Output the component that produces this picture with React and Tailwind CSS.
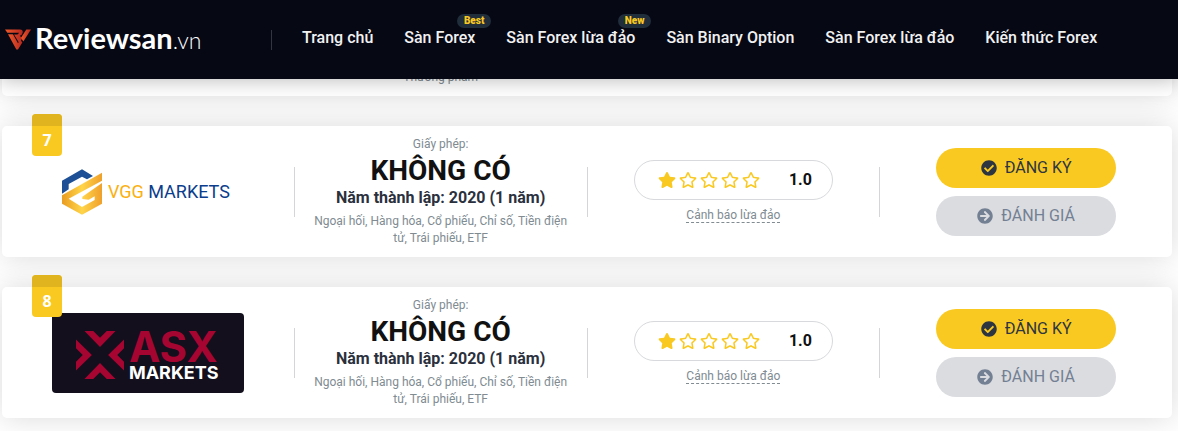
import React from "react";
import {
  FaStar,
  FaRegStar,
  FaCheckCircle,
  FaArrowCircleRight,
} from "react-icons/fa";

const navItems = [
  { label: "Trang chủ" },
  { label: "Sàn Forex", badge: "Best" },
  { label: "Sàn Forex lừa đảo", badge: "New" },
  { label: "Sàn Binary Option" },
  { label: "Sàn Forex lừa đảo" },
  { label: "Kiến thức Forex" },
];

function SiteLogo() {
  return (
    <a href="#" className="flex w-[266px] shrink-0 items-center text-white">
      <svg viewBox="0 0 78 62" className="mt-1 h-[21px] w-[26px]">
        <defs>
          <linearGradient id="siteMark" x1="0" y1="0" x2="1" y2="0">
            <stop offset="0" stopColor="#f0592a" />
            <stop offset="1" stopColor="#b5281f" />
          </linearGradient>
        </defs>
        <g fill="url(#siteMark)">
          <path d="M0 1H45Q55 2 53 11Q51 18 45 20L51 29L43 42L27 16H37Q41 15 42 11H7Z" />
          <path d="M9 15H24L39 42L46 32L52 40L39 61H34Z" />
          <path d="M64 1H78L55 37L48 26Z" />
        </g>
      </svg>
      <span className="ml-1 font-['Lato',sans-serif] text-[29px] leading-8 font-bold">
        Reviewsan
      </span>
      <span className="mt-1 font-['Lato',sans-serif] text-[23px] leading-8 font-light">
        .vn
      </span>
    </a>
  );
}

function Header() {
  return (
    <header className="relative z-10 flex h-[79px] items-center bg-[#060814] pb-1 pl-[5px] shadow-[0_0_20px_rgba(0,0,0,0.3)]">
      <SiteLogo />
      <span className="mt-1 h-5 w-px shrink-0 bg-[#34363f]" />
      <nav className="ml-[30px] flex gap-[31px] whitespace-nowrap">
        {navItems.map((item, i) => (
          <a
            key={i}
            href="#"
            className="relative text-base leading-5 font-medium text-[#f1f1f2]"
          >
            {item.label}
            {item.badge && (
              <span className="absolute -top-[14px] -right-4 h-[14px] rounded-full bg-[#202d3b] px-[7px] text-[10px] leading-[14px] font-black text-[#f9c922]">
                {item.badge}
              </span>
            )}
          </a>
        ))}
      </nav>
    </header>
  );
}

function VggLogo() {
  return (
    <div className="flex h-20 w-48 items-center pl-[10px]">
      <svg viewBox="0 0 120 136" className="h-[46px] w-10 shrink-0">
        <defs>
          <linearGradient id="vggGold" x1="0" y1="0" x2="1" y2="0">
            <stop offset="0" stopColor="#ea9c20" />
            <stop offset="0.5" stopColor="#ffd54a" />
            <stop offset="1" stopColor="#f0a02b" />
          </linearGradient>
        </defs>
        <path
          d="M60 0L93 20L75 30L60 22L20 44V60L0 73V34Z"
          fill="#1c4f96"
        />
        <path
          d="M120 10V34L20 88L60 113L98 92V81L80 91L61 89V82L120 41V103L60 136L0 103V78Z"
          fill="url(#vggGold)"
        />
      </svg>
      <span className="ml-[6px] text-[18px] leading-7 whitespace-nowrap text-[#0b3d8c]">
        <span className="text-[#fbb00f]">VGG</span> MARKETS
      </span>
    </div>
  );
}

function AsxLogo() {
  return (
    <div className="flex h-20 w-48 items-center rounded bg-[#130f1c] pl-6">
      <svg
        viewBox="0 0 142 142"
        className="mt-1 h-12 w-12 shrink-0"
        fill="#a60532"
      >
        <path d="M25 0H51L71 20L91 0H117L71 47Z" />
        <path d="M25 142H51L71 122L91 142H117L71 95Z" />
        <path d="M0 25L47 71L0 117V91L20 71L0 51Z" />
        <path d="M142 25L95 71L142 117V91L122 71L142 51Z" />
      </svg>
      <div className="mt-1 ml-[5px] font-['Inter',sans-serif]">
        <div className="text-[42px] leading-9 font-bold text-[#a60532]">
          ASX
        </div>
        <div className="text-[18px] leading-4 font-bold text-white">
          MARKETS
        </div>
      </div>
    </div>
  );
}

const brokers = [
  {
    rank: 7,
    logo: <VggLogo />,
    markets:
      "Ngoại hối, Hàng hóa, Cổ phiếu, Chỉ số, Tiền điện tử, Trái phiếu, ETF",
  },
  {
    rank: 8,
    logo: <AsxLogo />,
    markets:
      "Ngoại hối, Hàng hóa, Cổ phiếu, Chỉ số, Tiền điện tử, Trái phiếu, ETF",
  },
];

function Stars({ score }) {
  return (
    <span className="flex gap-[3px] text-[#f9c922]">
      {[1, 2, 3, 4, 5].map((n) =>
        n <= score ? (
          <FaStar key={n} className="h-4 w-[18px]" />
        ) : (
          <FaRegStar key={n} className="h-4 w-[18px]" />
        )
      )}
    </span>
  );
}

function Divider() {
  return <span className="h-[50px] bg-[#d4d5d7]" />;
}

function BrokerCard({ broker }) {
  return (
    <article className="relative grid grid-cols-[1fr_1px_1fr_1px_1fr_1px_1fr] items-center rounded-[5px] bg-white shadow-[0_0_30px_rgba(0,0,0,0.15)]">
      {/* Logo */}
      <div className="flex justify-center">{broker.logo}</div>
      <Divider />

      {/* Info */}
      <div className="px-[15px] pt-[10px] pb-[10px] text-center">
        <p className="text-xs leading-[17px] text-[#808b92]">Giấy phép:</p>
        <h2 className="mt-px text-[28px] leading-[34px] font-bold text-[#111]">
          KHÔNG CÓ
        </h2>
        <p className="text-base leading-5 font-bold text-[#2b303d]">
          Năm thành lập: 2020 (1 năm)
        </p>
        <p className="mt-[5px] text-xs leading-[17px] text-[#808b92]">
          {broker.markets}
        </p>
      </div>
      <Divider />

      {/* Rating */}
      <div className="flex flex-col items-center">
        <div className="flex h-10 w-[199px] items-center justify-between rounded-full border border-[#d8d9dc] pr-5 pl-[23px]">
          <Stars score={1} />
          <span className="text-base font-bold text-[#111]">1.0</span>
        </div>
        <a
          href="#"
          className="mt-2 border-b border-dashed border-[#808b92] text-xs leading-[14px] text-[#808b92]"
        >
          Cảnh báo lừa đảo
        </a>
      </div>
      <Divider />

      {/* Actions */}
      <div className="flex flex-col items-center gap-2">
        <button
          type="button"
          className="flex h-10 w-[180px] items-center justify-center gap-2 rounded-full bg-[#f9c922] text-base text-[#2d3540]"
        >
          <FaCheckCircle />
          ĐĂNG KÝ
        </button>
        <button
          type="button"
          className="flex h-10 w-[180px] items-center justify-center gap-2 rounded-full bg-[#dbdce0] text-base text-[#738093]"
        >
          <FaArrowCircleRight />
          ĐÁNH GIÁ
        </button>
      </div>

      {/* Rank */}
      <div className="absolute -top-3 left-[30px] h-[42px] w-[30px] overflow-hidden rounded bg-[#f9c922] text-center font-['Open_Sans',sans-serif] text-base font-bold text-white">
        <div className="h-3 bg-[#e0b41f]" />
        <div className="leading-7">{broker.rank}</div>
      </div>
    </article>
  );
}

export default function App() {
  return (
    <div className="min-h-screen overflow-hidden bg-white font-['Roboto',sans-serif]">
      <Header />
      <main className="-mt-[10px] mr-[6px] ml-[2px] flex flex-col gap-[30px] pb-[13px]">
        {/* End of the card that is scrolled under the header */}
        <article className="grid grid-cols-4 rounded-b-[5px] bg-white pb-[10px] shadow-[0_0_30px_rgba(0,0,0,0.15)]">
          <p className="col-start-2 text-center text-xs leading-[17px] text-[#808b92]">
            Thương phẩm
          </p>
        </article>
        {brokers.map((broker) => (
          <BrokerCard key={broker.rank} broker={broker} />
        ))}
      </main>
    </div>
  );
}
